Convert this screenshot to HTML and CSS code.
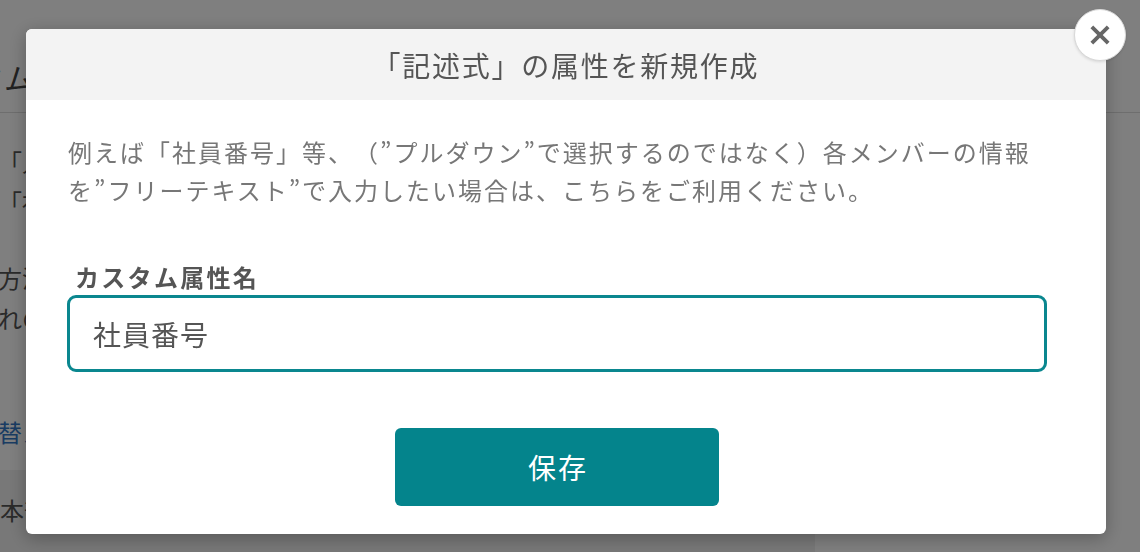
FILE: index.html
```html
<!DOCTYPE html>
<html lang="ja">
<head>
<meta charset="utf-8">
<title>「記述式」の属性を新規作成</title>
<link rel="stylesheet" href="styles.css">
</head>
<body>
<div class="page">
  <header class="page-head">
    <h1 class="page-title">カスタム属性</h1>
  </header>
  <div class="page-main">
    <section class="page-content">
      <p class="page-line">「人事評価」の属性</p>
      <p class="page-line">「社員番号」の属性</p>
      <p class="page-line page-gap">方法を選択してください</p>
      <p class="page-line">れの属性を設定</p>
      <a class="page-link" href="#">替える</a>
    </section>
    <section class="page-band">
      <p class="page-line">本部</p>
    </section>
  </div>
</div>

<div class="overlay">
  <div class="modal">
    <button class="close-btn" type="button" aria-label="閉じる">
      <svg width="52" height="52" viewBox="0 0 52 52" aria-hidden="true">
        <path d="M17.5 17.5 L34.5 34.5 M34.5 17.5 L17.5 34.5" stroke="#666" stroke-width="4" fill="none"/>
      </svg>
    </button>
    <div class="modal-head">「記述式」の属性を新規作成</div>
    <div class="modal-body">
      <p class="desc">例えば「社員番号」等、（”プルダウン”で選択するのではなく）各メンバーの情報を”フリーテキスト”で入力したい場合は、こちらをご利用ください。</p>
      <label class="field-label" for="attr-name">カスタム属性名</label>
      <input class="field-input" id="attr-name" type="text" value="社員番号">
      <div class="actions">
        <button class="save-btn" type="button">保存</button>
      </div>
    </div>
  </div>
</div>
</body>
</html>
```

FILE: styles.css
```css
* {
  box-sizing: border-box;
}

html, body {
  margin: 0;
  padding: 0;
  height: 100%;
  overflow: hidden;
}

body {
  font-family: "Noto Sans CJK JP", "Noto Sans", sans-serif;
  background: #ffffff;
  color: #555555;
  text-spacing-trim: space-all;
}

/* Background page (under overlay) */
.page {
  width: 1140px;
  height: 552px;
  display: flex;
  flex-direction: column;
}

.page-head {
  height: 113px;
  border-bottom: 1px solid #dcdcdc;
  display: flex;
  align-items: flex-start;
  padding-top: 57px;
}

.page-title {
  margin: 0 0 0 -86px;
  font-size: 30px;
  font-weight: 400;
  color: #444444;
  line-height: 40px;
}

.page-main {
  flex: 1;
  display: flex;
  flex-direction: column;
}

.page-content {
  padding: 29px 0 0 0;
  margin-left: -2px;
  height: 357px;
}

.page-line {
  margin: 0;
  font-size: 24px;
  line-height: 40px;
  color: #555555;
}

.page-gap {
  margin-top: 36px;
}

.page-link {
  display: block;
  margin-top: 74px;
  font-size: 24px;
  line-height: 40px;
  color: #3478c6;
  text-decoration: none;
}

.page-band {
  flex: 1;
  width: 815px;
  background: #f0f0f0;
  padding-top: 20px;
}

/* Overlay + modal */
.overlay {
  position: fixed;
  inset: 0;
  background: rgba(0, 0, 0, 0.5);
  display: flex;
  align-items: flex-start;
  padding: 29px 0 0 26px;
}

.modal {
  position: relative;
  width: 1080px;
  background: #ffffff;
  border-radius: 6px;
  box-shadow: 0 4px 18px rgba(0, 0, 0, 0.28);
}

.close-btn {
  position: absolute;
  top: -20px;
  right: -20px;
  width: 52px;
  height: 52px;
  padding: 0;
  border: 1px solid #d8d8d8;
  border-radius: 50%;
  background: #ffffff;
  display: flex;
  align-items: center;
  justify-content: center;
  box-shadow: 0 1px 3px rgba(0, 0, 0, 0.12);
}

.close-btn svg {
  display: block;
}

.modal-head {
  height: 71px;
  background: #f3f3f3;
  border-radius: 6px 6px 0 0;
  display: flex;
  align-items: center;
  justify-content: center;
  font-size: 28px;
  letter-spacing: 1.75px;
  color: #555555;
}

.modal-body {
  padding: 33px 59px 28px 41px;
  display: flex;
  flex-direction: column;
}

.desc {
  margin: 0;
  padding-left: 1px;
  font-size: 24px;
  line-height: 38px;
  letter-spacing: 2px;
  color: #777777;
}

.field-label {
  margin-top: 51px;
  margin-bottom: 1px;
  padding-left: 8px;
  font-size: 24px;
  line-height: 34px;
  font-weight: 700;
  letter-spacing: 2.3px;
  color: #555555;
}

.field-input {
  width: 100%;
  height: 77px;
  border: 3px solid #0a878f;
  border-radius: 9px;
  padding: 0 0 0 23px;
  font-family: "Noto Sans CJK JP", "Noto Sans", sans-serif;
  font-size: 28px;
  letter-spacing: 1px;
  color: #555555;
  background: #ffffff;
  outline: none;
}

.actions {
  margin-top: 56px;
  display: flex;
  justify-content: center;
}

.save-btn {
  width: 324px;
  height: 78px;
  border: none;
  border-radius: 6px;
  background: #04848c;
  color: #ffffff;
  font-family: "Noto Sans CJK JP", "Noto Sans", sans-serif;
  font-size: 28px;
  letter-spacing: 2px;
  padding: 0 0 0 2px;
}
```
